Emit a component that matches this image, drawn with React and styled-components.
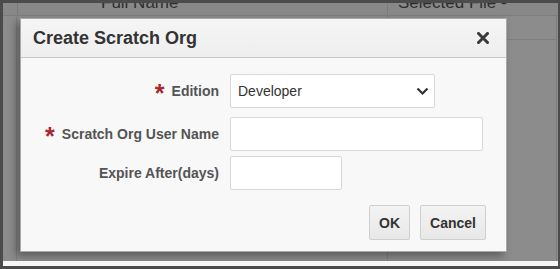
import React from "react";
import styled, { createGlobalStyle } from "styled-components";

const GlobalStyle = createGlobalStyle`
  html, body {
    margin: 0;
    padding: 0;
    background: #4b4b4b;
  }
  * {
    box-sizing: border-box;
  }
`;

const fields = [
  { key: "edition", label: "Edition", required: true, type: "select", width: 205, gap: 0 },
  { key: "user", label: "Scratch Org User Name", required: true, type: "text", width: 253, gap: 9 },
  { key: "expire", label: "Expire After(days)", required: false, type: "text", width: 112, gap: 5 },
];

const App = () => {
  return (
    <>
      <GlobalStyle />
      <Screen>
        <Page>
          <GridHeader>
            <HeaderCell width={14} />
            <HeaderCell width={370} pad={83}>
              Full Name
            </HeaderCell>
            <HeaderCell width={170} pad={10}>
              Selected File -
            </HeaderCell>
          </GridHeader>
          <GridBody>
            <GridColumn width={14} lined />
            <GridColumn width={370} />
            <GridColumn width={170} lined ruled />
          </GridBody>
          <Dialog>
            <DialogHeader>
              <Title>Create Scratch Org</Title>
              <CloseButton aria-label="Close">
                <svg width="12" height="12" viewBox="0 0 12 12">
                  <path
                    d="M1.5 1.5 L10.5 10.5 M10.5 1.5 L1.5 10.5"
                    stroke="#3a3a3a"
                    strokeWidth="3"
                    strokeLinecap="square"
                  />
                </svg>
              </CloseButton>
            </DialogHeader>
            <DialogBody>
              <Form>
                {fields.map((f) => (
                  <Row key={f.key} gap={f.gap}>
                    <Label>
                      {f.required && <Star>*</Star>}
                      {f.label}
                    </Label>
                    {f.type === "select" ? (
                      <SelectBox width={f.width}>
                        <span>Developer</span>
                        <svg width="13" height="9" viewBox="0 0 13 9">
                          <path
                            d="M1.5 1.5 L6.5 6.5 L11.5 1.5"
                            fill="none"
                            stroke="#333"
                            strokeWidth="2.2"
                          />
                        </svg>
                      </SelectBox>
                    ) : (
                      <Input width={f.width} />
                    )}
                  </Row>
                ))}
              </Form>
              <Actions>
                <Button>OK</Button>
                <Button>Cancel</Button>
              </Actions>
            </DialogBody>
          </Dialog>
        </Page>
        <BottomStrip />
      </Screen>
    </>
  );
};

export default App;

const Screen = styled.div`
  width: 560px;
  height: 269px;
  background: #4b4b4b;
  padding: 3px 2px 3px 3px;
  display: flex;
  flex-direction: column;
  overflow: hidden;
`;

const Page = styled.div`
  position: relative;
  flex: 1;
  background: #8c8c8c;
  display: flex;
  flex-direction: column;
  overflow: hidden;
`;

const GridHeader = styled.div`
  display: flex;
  height: 13px;
  border-bottom: 1px solid #7d7d7d;
  background: #888;
  overflow: hidden;
`;

const HeaderCell = styled.div`
  width: ${(p) => p.width}px;
  padding-left: ${(p) => p.pad || 0}px;
  margin-top: -10px;
  font-family: "Liberation Sans", sans-serif;
  font-size: 17px;
  color: #2e2e2e;
  white-space: nowrap;
  & + & {
    border-left: 1px solid #7a7a7a;
  }
`;

const GridBody = styled.div`
  flex: 1;
  display: flex;
`;

const GridColumn = styled.div`
  width: ${(p) => p.width}px;
  border-right: ${(p) => (p.lined ? "1px solid #7e7e7e" : "none")};
  border-left: ${(p) => (p.ruled ? "1px solid #7e7e7e" : "none")};
  background: ${(p) =>
    p.ruled
      ? "linear-gradient(#8c8c8c 0 23px, #7f7f7f 23px 24px, #8c8c8c 24px)"
      : "transparent"};
`;

const BottomStrip = styled.div`
  height: 5px;
  background: #f6f6f6;
`;

const Dialog = styled.div`
  position: absolute;
  left: 17px;
  top: 15px;
  width: 487px;
  height: 234px;
  background: #f8f8f8;
  border: 1px solid #a9a9a9;
  box-shadow: -4px 4px 8px rgba(0, 0, 0, 0.35);
  display: flex;
  flex-direction: column;
`;

const DialogHeader = styled.div`
  height: 39px;
  display: flex;
  align-items: center;
  justify-content: space-between;
  padding: 0 17px 0 12px;
  background: linear-gradient(#f5f5f5, #eeeeee);
  border-bottom: 1px solid #c8c8c8;
`;

const Title = styled.h1`
  margin: 0;
  font-family: "Liberation Sans", sans-serif;
  font-size: 18px;
  font-weight: bold;
  color: #333;
`;

const CloseButton = styled.button`
  border: none;
  background: none;
  padding: 0;
  display: flex;
  cursor: pointer;
`;

const DialogBody = styled.div`
  flex: 1;
  display: flex;
  flex-direction: column;
  padding: 16px 20px 0 0;
`;

const Form = styled.div`
  display: flex;
  flex-direction: column;
`;

const Row = styled.div`
  display: grid;
  grid-template-columns: 198px auto;
  column-gap: 11px;
  align-items: center;
  margin-top: ${(p) => p.gap}px;
`;

const Label = styled.label`
  display: flex;
  align-items: center;
  justify-content: flex-end;
  font-family: "Liberation Sans", sans-serif;
  font-size: 14px;
  font-weight: bold;
  color: #545454;
  white-space: nowrap;
`;

const Star = styled.span`
  color: #a8282f;
  font-size: 25px;
  line-height: 14px;
  height: 14px;
  margin-right: 7px;
  position: relative;
  top: 2px;
`;

const SelectBox = styled.div`
  width: ${(p) => p.width}px;
  height: 34px;
  background: #fff;
  border: 1px solid #d8d8d8;
  border-radius: 2px;
  display: flex;
  align-items: center;
  justify-content: space-between;
  padding: 0 5px 0 7px;
  font-family: "Liberation Sans", sans-serif;
  font-size: 14px;
  color: #333;
`;

const Input = styled.div`
  width: ${(p) => p.width}px;
  height: 34px;
  background: #fff;
  border: 1px solid #d8d8d8;
  border-radius: 2px;
`;

const Actions = styled.div`
  display: flex;
  justify-content: flex-end;
  gap: 10px;
  margin-top: 15px;
`;

const Button = styled.button`
  height: 35px;
  padding: 0 9px;
  background: linear-gradient(#f3f3f3, #e8e8e8);
  border: 1px solid #cfcfcf;
  border-radius: 2px;
  font-family: "Liberation Sans", sans-serif;
  font-size: 14px;
  font-weight: bold;
  color: #333;
`;
